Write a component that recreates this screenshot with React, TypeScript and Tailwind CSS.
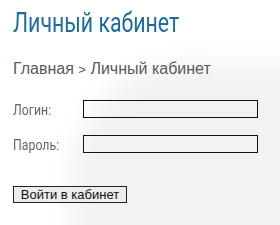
export default function App() {
  return (
    <div className="relative w-[280px] h-[225px] overflow-hidden bg-white">
      <div className="absolute left-[70px] top-[62px] w-[280px] h-[220px] rounded-tl-[120px] bg-[#f2f2f2] blur-[12px]" />
      <div className="relative pl-[13px] pt-[6px]">
        <h1 className="inline-block origin-left scale-x-[0.79] whitespace-nowrap text-[27px] leading-[34px] text-[#1d6c99] font-['Roboto',sans-serif]">
          Личный кабинет
        </h1>
        <div className="mt-[19px] text-[16px] leading-[20px] text-[#5a5a5a] font-['Liberation_Sans',Arial,sans-serif] whitespace-nowrap">
          Главная <span className="text-[13px]">&gt;</span> Личный кабинет
        </div>
        <div className="mt-[20px] flex flex-col gap-[17px]">
          <div className="flex items-center h-[18px]">
            <span className="w-[70px] leading-[18px]">
              <span className="inline-block origin-left scale-x-[0.88] text-[14px] leading-[18px] text-[#666] font-['Roboto',sans-serif]">Логин:</span>
            </span>
            <input className="w-[175px] h-[18px] border-[1.5px] border-[#111] bg-transparent outline-none" />
          </div>
          <div className="flex items-center h-[18px]">
            <span className="w-[70px] leading-[18px]">
              <span className="inline-block origin-left scale-x-[0.88] text-[14px] leading-[18px] text-[#666] font-['Roboto',sans-serif]">Пароль:</span>
            </span>
            <input type="password" className="w-[175px] h-[18px] border-[1.5px] border-[#111] bg-transparent outline-none" />
          </div>
        </div>
        <button className="mt-[33px] h-[17px] w-[114px] border border-[#222] bg-[#ededed] text-[13px] leading-[15px] text-[#111] font-['Liberation_Sans',Arial,sans-serif] flex items-center justify-center">
          Войти в кабинет
        </button>
      </div>
    </div>
  );
}
